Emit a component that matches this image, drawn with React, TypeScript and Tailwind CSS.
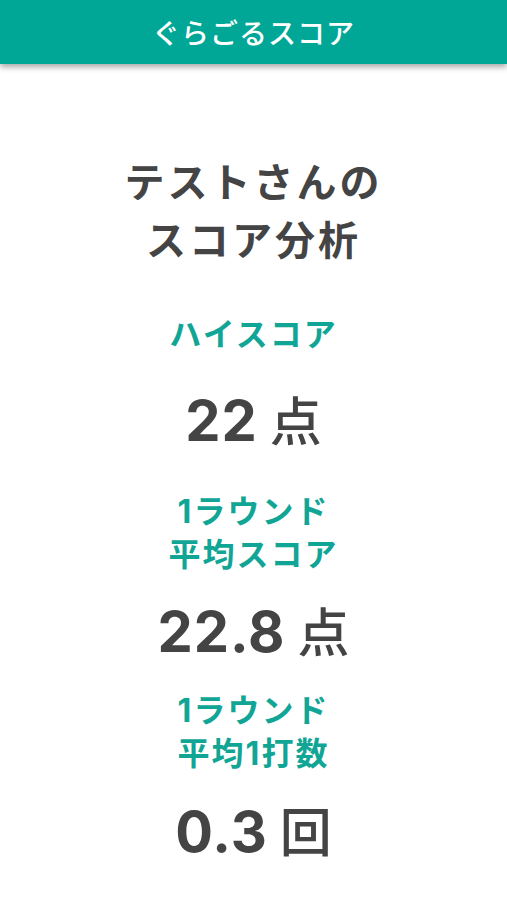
import React from "react";

const cjk = { fontFamily: '"Noto Sans CJK JP", "Noto Sans", sans-serif' };
const num = { fontFamily: 'Inter, "Noto Sans CJK JP", sans-serif' };

function Label({ children }: { children: React.ReactNode }) {
  return (
    <div
      className="text-[32px] font-bold leading-[43px] text-[#11a595] text-center tracking-[2px]"
      style={num}
    >
      {children}
    </div>
  );
}

function Value({ value, unit }: { value: string; unit: string }) {
  return (
    <div className="flex items-baseline justify-center text-[#444444] leading-[64px]">
      <span className="text-[56px] font-bold tracking-[1px]" style={num}>
        {value}
      </span>
      <span className="ml-[12px] text-[52px] font-medium" style={cjk}>
        {unit}
      </span>
    </div>
  );
}

export default function App() {
  return (
    <div className="min-h-[900px] bg-white" style={cjk}>
      <header className="h-[64px] bg-[#00a796] flex items-center justify-center shadow-[0_3px_6px_rgba(0,0,0,0.35)]">
        <span className="text-white text-[28px] font-medium tracking-[1px]">ぐらごるスコア</span>
      </header>
      <main className="flex flex-col items-center">
        <h1 className="mt-[87px] text-[40px] font-bold leading-[58px] text-[#444444] text-center tracking-[3px]">
          テストさんの
          <br />
          スコア分析
        </h1>
        <div className="mt-[46px]">
          <Label>ハイスコア</Label>
        </div>
        <div className="mt-[31px]">
          <Value value="22" unit="点" />
        </div>
        <div className="mt-[37px]">
          <Label>
            1ラウンド
            <br />
            平均スコア
          </Label>
        </div>
        <div className="mt-[22px]">
          <Value value="22.8" unit="点" />
        </div>
        <div className="mt-[25px]">
          <Label>
            1ラウンド
            <br />
            平均1打数
          </Label>
        </div>
        <div className="mt-[23px]">
          <Value value="0.3" unit="回" />
        </div>
      </main>
    </div>
  );
}
